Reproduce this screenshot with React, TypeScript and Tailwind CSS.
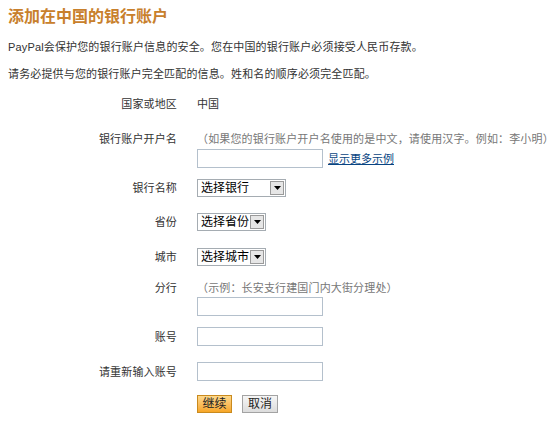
import React from "react";

const font = { fontFamily: '"Liberation Sans", "Noto Sans CJK SC", sans-serif' };

function Select({ text, width, gap }: { text: string; width: string; gap: string }) {
  return (
    <div className={`flex h-[18px] items-center border border-[#a5acb2] bg-white pl-[3px] pr-[1px] ${width}`}>
      <span className="text-[12px] leading-[16px] text-black">{text}</span>
      <div className={`flex-1 ${gap}`} />
      <div className="flex h-[14px] w-[14px] items-center justify-center border border-[#9a9a9a] bg-[#e6e6e6]">
        <svg width="7" height="4" viewBox="0 0 7 4">
          <path d="M0 0 H7 L3.5 4 Z" fill="#000" />
        </svg>
      </div>
    </div>
  );
}

function Input() {
  return <div className="h-[19px] w-[126px] border border-[#b4c0cc] bg-white" />;
}

function Label({ children }: { children: React.ReactNode }) {
  return <div className="w-[169px] shrink-0 text-right text-[11px] leading-[16px] tracking-[0.15px] text-[#333]">{children}</div>;
}

export default function App() {
  return (
    <div className="h-[422px] w-[558px] bg-white pl-[8px] pt-[7px]" style={font}>
      <h1 className="text-[16px] font-bold leading-[20px] text-[#c8802c]">添加在中国的银行账户</h1>
      <p className="mt-[12px] text-[11px] leading-[16px] tracking-[0.15px] text-[#333]">
        PayPal会保护您的银行账户信息的安全。您在中国的银行账户必须接受人民币存款。
      </p>
      <p className="mt-[11px] text-[11px] leading-[16px] tracking-[0.15px] text-[#333]">
        请务必提供与您的银行账户完全匹配的信息。姓和名的顺序必须完全匹配。
      </p>

      <div className="mt-[14px] flex gap-[20px]">
        <Label>国家或地区</Label>
        <div className="text-[11px] leading-[16px] text-[#333]">中国</div>
      </div>

      <div className="mt-[19px] flex gap-[20px]">
        <Label>银行账户开户名</Label>
        <div className="flex flex-col">
          <div className="text-[11px] leading-[16px] tracking-[0.15px] text-[#777]">
            （如果您的银行账户开户名使用的是中文，请使用汉字。例如：李小明）
          </div>
          <div className="mt-[2px] flex items-center gap-[5px]">
            <Input />
            <a className="text-[11px] leading-[16px] text-[#084482] underline" href="#">
              显示更多示例
            </a>
          </div>
        </div>
      </div>

      <div className="mt-[11px] flex items-center gap-[20px]">
        <Label>银行名称</Label>
        <Select text="选择银行" width="w-[89px]" gap="" />
      </div>

      <div className="mt-[16px] flex items-center gap-[20px]">
        <Label>省份</Label>
        <Select text="选择省份" width="w-[69px]" gap="" />
      </div>

      <div className="mt-[17px] flex items-center gap-[20px]">
        <Label>城市</Label>
        <Select text="选择城市" width="w-[69px]" gap="" />
      </div>

      <div className="mt-[14px] flex gap-[20px]">
        <Label>分行</Label>
        <div className="flex flex-col">
          <div className="text-[11px] leading-[16px] tracking-[0.15px] text-[#777]">（示例：长安支行建国门内大街分理处）</div>
          <div className="mt-[1px]">
            <Input />
          </div>
        </div>
      </div>

      <div className="mt-[11px] flex items-center gap-[20px]">
        <Label>账号</Label>
        <Input />
      </div>

      <div className="mt-[16px] flex items-center gap-[20px]">
        <Label>请重新输入账号</Label>
        <Input />
      </div>

      <div className="mt-[14px] flex gap-[10px] pl-[189px]">
        <button className="h-[18px] w-[35px] border border-[#c98a1e] bg-gradient-to-b from-[#fdd88a] to-[#f7a623] text-[12px] leading-[16px] text-[#222]">
          继续
        </button>
        <button className="h-[18px] w-[36px] border border-[#a3a3a3] bg-gradient-to-b from-[#f6f6f6] to-[#dcdcdc] text-[12px] leading-[16px] text-[#222]">
          取消
        </button>
      </div>
    </div>
  );
}
